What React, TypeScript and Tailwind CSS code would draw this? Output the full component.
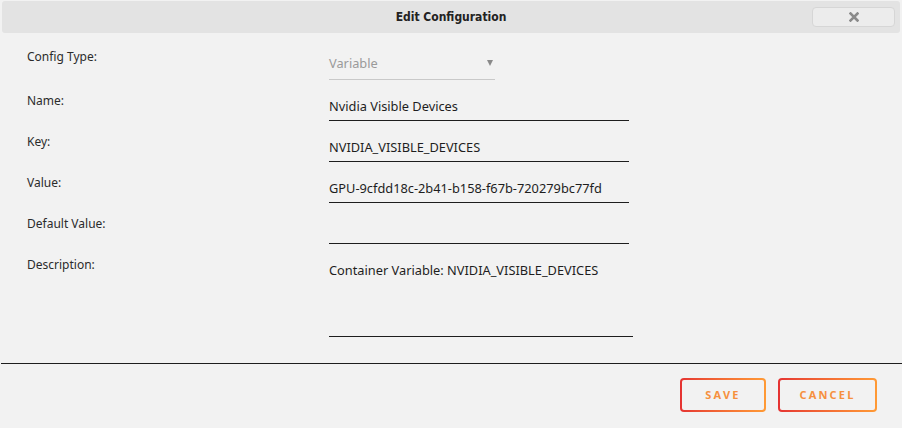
import React from "react"

const font = { fontFamily: '"Noto Sans", "Open Sans", sans-serif' }

function Field({ label, value, height, width = "w-[300px]" }: { label: string; value?: string; height: string; width?: string }) {
  return (
    <div className="flex">
      <div className="w-[329px] pl-[27px] text-[12px] leading-[16px] text-[#2b2b2b]">{label}</div>
      <div className={`${width} ${height} border-b border-[#1e1e1e] pt-[5px] text-[12.8px] leading-[16px] text-[#1e1e1e]`}>{value}</div>
    </div>
  )
}

export default function App() {
  return (
    <div className="flex h-[428px] w-[902px] flex-col overflow-hidden bg-[#f2f2f2]" style={font}>
      <header className="mx-[2px] mt-[1px] grid h-[32px] grid-cols-[1fr_auto_1fr] items-center rounded-[3px] bg-[#e3e3e3]">
        <div />
        <h1
          className="text-[12px] font-bold text-[#222]"
          style={{ fontFamily: '"DejaVu Sans Condensed", "DejaVu Sans", sans-serif' }}
        >
          Edit Configuration
        </h1>
        <div className="flex justify-end pr-[5px]">
          <button className="flex h-[20px] w-[83px] items-center justify-center rounded-[4px] border border-[#d6d6d6] bg-[#ececec]">
            <svg width="10" height="10" viewBox="0 0 10 10">
              <path d="M1.5 1.5L8.5 8.5M8.5 1.5L1.5 8.5" stroke="#8a8a8a" strokeWidth="2.6" strokeLinecap="square" />
            </svg>
          </button>
        </div>
      </header>

      <div className="flex flex-col gap-[13px] pt-[16px]">
        <div className="flex">
          <div className="w-[329px] pl-[27px] text-[12px] leading-[16px] text-[#2b2b2b]">Config Type:</div>
          <div className="flex h-[31px] w-[166px] items-start justify-between border-b border-[#c9c9c9] pt-[6px] pr-[2px] text-[12.8px] leading-[16px] text-[#9a9a9a]">
            <span>Variable</span>
            <svg className="mt-[5px]" width="6" height="6" viewBox="0 0 6 6">
              <path d="M0 0H6L3 6Z" fill="#8a8a8a" />
            </svg>
          </div>
        </div>
        <Field label="Name:" value="Nvidia Visible Devices" height="h-[28px]" />
        <Field label="Key:" value="NVIDIA_VISIBLE_DEVICES" height="h-[28px]" />
        <Field label="Value:" value="GPU-9cfdd18c-2b41-b158-f67b-720279bc77fd" height="h-[28px]" />
        <Field label="Default Value:" height="h-[28px]" />
        <Field label="Description:" value="Container Variable: NVIDIA_VISIBLE_DEVICES" height="h-[80px]" width="w-[304px]" />
      </div>

      <div className="ml-[1px] mt-[26px] h-[1px] bg-[#1e1e1e]" />

      <div className="mt-[14px] flex justify-end gap-[12px] pr-[25px]">
        <div className="rounded-[4px] bg-gradient-to-r from-[#e53232] to-[#ff9a35] p-[2px]">
          <button className="flex h-[30px] w-[82px] items-center justify-center rounded-[2px] bg-[#f2f2f2] text-[11px] font-bold tracking-[2.2px] text-[#f6903e]">
            SAVE
          </button>
        </div>
        <div className="rounded-[4px] bg-gradient-to-r from-[#e53232] to-[#ff9a35] p-[2px]">
          <button className="flex h-[30px] w-[95px] items-center justify-center rounded-[2px] bg-[#f2f2f2] text-[11px] font-bold tracking-[2.2px] text-[#f6903e]">
            CANCEL
          </button>
        </div>
      </div>
    </div>
  )
}
